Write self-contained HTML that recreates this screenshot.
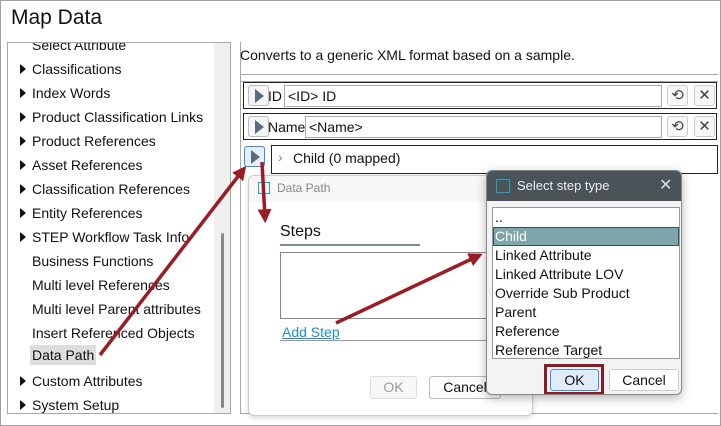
<!DOCTYPE html>
<html><head><style>
*{box-sizing:border-box;margin:0;padding:0}
body{width:721px;height:426px;overflow:hidden;background:#fff;font-family:"Liberation Sans",sans-serif;font-size:14px;color:#111;position:relative}
.abs{position:absolute}
.outer{left:0;top:0;width:721px;height:426px;border:1px solid #a0a0a0}
.title{left:11px;top:6px;font-size:21px;color:#111}
.left{left:7px;top:42px;width:224px;height:372px;border:1px solid #a8a8a8;overflow:hidden;background:#fff}
.sb{left:206px;top:0;width:17px;height:372px;background:#f0f0f0}
.thumb{left:213px;top:190px;width:3px;height:175px;background:#888;border-radius:2px}
.it{position:absolute;left:24px;font-size:14px;white-space:nowrap}
.tri{position:absolute;left:12px;width:0;height:0;border-left:6px solid #111;border-top:5px solid transparent;border-bottom:5px solid transparent}
.sel{background:#ddd;padding:2px 2px;margin-left:-2px}
.right{left:240px;top:42px;width:478px;height:372px;border:1px solid #a8a8a8;border-top:none;border-right:none}
.row{position:absolute;left:243px;width:474px;height:27px;border:1px solid #222;background:#fff}
.btnp{position:absolute;width:21px;height:21px;border:1px solid #bbb;border-radius:3px;background:#f5f5f5}
.btnp:after{content:"";position:absolute;left:6px;top:3px;border-left:9px solid #5a6c80;border-top:7px solid transparent;border-bottom:7px solid transparent}
.fld{position:absolute;height:22px;border:1px solid #aaa;background:#fff;padding-left:3px;line-height:20px}
.ib{position:absolute;width:21px;height:21px;border:1px solid #ccc;border-radius:3px;background:#f7f7f7;font-size:15px;text-align:center;line-height:19px;color:#444}
.dp{left:248px;top:175px;width:285px;height:241px;border:1px solid #ccc;border-radius:6px;background:#fff;box-shadow:0 2px 6px rgba(0,0,0,.15)}
.sd{left:486px;top:170px;width:196px;height:225px;border:1px solid #888;border-radius:6px;background:#f3f3f3;box-shadow:0 3px 10px rgba(0,0,0,.3);overflow:hidden}
.li{position:absolute;left:2px;font-size:14px;white-space:nowrap}
</style></head><body>
<div class="abs outer"></div>
<div class="abs title">Map Data</div>
<div class="abs left">
 <div class="sb abs"></div><div class="thumb abs"></div>
 <div class="it" style="top:-6px">Select Attribute</div>
 <div class="tri" style="top:21px"></div><div class="it" style="top:18px">Classifications</div>
 <div class="tri" style="top:45px"></div><div class="it" style="top:42px">Index Words</div>
 <div class="tri" style="top:69px"></div><div class="it" style="top:66px">Product Classification Links</div>
 <div class="tri" style="top:93px"></div><div class="it" style="top:90px">Product References</div>
 <div class="tri" style="top:117px"></div><div class="it" style="top:114px">Asset References</div>
 <div class="tri" style="top:141px"></div><div class="it" style="top:138px">Classification References</div>
 <div class="tri" style="top:165px"></div><div class="it" style="top:162px">Entity References</div>
 <div class="tri" style="top:189px"></div><div class="it" style="top:186px">STEP Workflow Task Info</div>
 <div class="it" style="top:210px">Business Functions</div>
 <div class="it" style="top:234px">Multi level References</div>
 <div class="it" style="top:258px">Multi level Parent attributes</div>
 <div class="it" style="top:282px">Insert Referenced Objects</div>
 <div class="it" style="top:304px"><span class="sel">Data Path</span></div>
 <div class="tri" style="top:333px"></div><div class="it" style="top:330px">Custom Attributes</div>
 <div class="tri" style="top:357px"></div><div class="it" style="top:354px">System Setup</div>
</div>
<div class="abs right"></div>
<div class="abs" style="left:240px;top:47px">Converts to a generic XML format based on a sample.</div>
<div class="abs" style="left:240px;top:74px;width:478px;height:1px;background:#aaa"></div>
<div class="abs" style="left:241px;top:81px;width:477px;height:1px;background:#aaa"></div>
<div class="row" style="top:82px"><div class="btnp" style="left:4px;top:2px"></div><div class="abs" style="left:24px;top:5px">ID</div><div class="fld" style="left:40px;top:2px;width:378px">&lt;ID&gt; ID</div><div class="ib" style="left:423px;top:2px">⟲</div><div class="ib" style="left:450px;top:2px">✕</div></div>
<div class="row" style="top:113px"><div class="btnp" style="left:4px;top:2px"></div><div class="abs" style="left:24px;top:5px">Name</div><div class="fld" style="left:61px;top:2px;width:357px">&lt;Name&gt;</div><div class="ib" style="left:423px;top:2px">⟲</div><div class="ib" style="left:450px;top:2px">✕</div></div>
<div class="btnp" style="left:244px;top:146px;border-color:#3a8ee0;background:#e6f0fb"></div>
<div class="row" style="left:271px;top:145px;width:447px;height:29px"><div class="abs" style="left:6px;top:3px;color:#888">›</div><div class="abs" style="left:21px;top:4px">Child (0 mapped)</div></div>
<div class="abs dp">
 <div class="abs" style="left:0;top:0;width:283px;height:26px;background:#f7f7f7;border-radius:6px 6px 0 0"></div>
 <div class="abs" style="left:9px;top:6px;width:12px;height:12px;border:1.5px solid #1ba3c6"></div>
 <div class="abs" style="left:28px;top:5px;font-size:12px;color:#888">Data Path</div>
 <div class="abs" style="left:31px;top:47px;font-size:16px">Steps</div>
 <div class="abs" style="left:31px;top:68px;width:140px;height:2px;background:#7a8a99"></div>
 <div class="abs" style="left:31px;top:76px;width:210px;height:67px;border:1px solid #888"></div>
 <div class="abs" style="left:33px;top:148px;color:#1a8fd8;text-decoration:underline">Add Step</div>
 <div class="abs" style="left:31px;top:164px;width:210px;height:1px;background:#999"></div>
 <div class="abs" style="left:121px;top:200px;width:47px;height:23px;border:1px solid #ddd;border-radius:3px;background:#f7f7f7;color:#999;text-align:center;line-height:21px">OK</div>
 <div class="abs" style="left:180px;top:200px;width:72px;height:23px;border:1px solid #bbb;border-radius:3px;background:#fdfdfd;text-align:center;line-height:21px">Cancel</div>
</div>
<div class="abs sd">
 <div class="abs" style="left:0;top:0;width:196px;height:30px;background:#4b5359"></div>
 <div class="abs" style="left:9px;top:8px;width:14px;height:14px;border:1.5px solid #1ba3c6"></div>
 <div class="abs" style="left:30px;top:7px;font-size:13px;color:#eee">Select step type</div>
 <div class="abs" style="left:172px;top:4px;font-size:16px;color:#ddd">✕</div>
 <div class="abs" style="left:5px;top:36px;width:188px;height:152px;border:1px solid #999;background:#fff">
  <div class="li" style="top:1px">..</div>
  <div class="abs" style="left:0;top:19px;width:186px;height:19px;background:#7fa5ab;border:1px solid #2f5660"></div>
  <div class="li" style="top:20px;color:#fff">Child</div>
  <div class="li" style="top:39px">Linked Attribute</div>
  <div class="li" style="top:58px">Linked Attribute LOV</div>
  <div class="li" style="top:77px">Override Sub Product</div>
  <div class="li" style="top:96px">Parent</div>
  <div class="li" style="top:115px">Reference</div>
  <div class="li" style="top:134px">Reference Target</div>
 </div>
 <div class="abs" style="left:57px;top:193px;width:60px;height:31px;border:3px solid #8e1a22"></div>
 <div class="abs" style="left:63px;top:198px;width:49px;height:22px;border:1px solid #3a8ee0;border-radius:3px;background:#e0ecf8;text-align:center;line-height:20px">OK</div>
 <div class="abs" style="left:122px;top:198px;width:70px;height:22px;border:1px solid #ccc;border-radius:3px;background:#fff;text-align:center;line-height:20px">Cancel</div>
</div>
<svg class="abs" style="left:0;top:0" width="721" height="426">
<defs><marker id="a" markerWidth="4" markerHeight="4" refX="2.5" refY="2" orient="auto"><path d="M0,0 L4,2 L0,4 z" fill="#9b1c24"/></marker></defs>
<g stroke="#9b1c24" stroke-width="3.5" fill="none" marker-end="url(#a)">
<line x1="100" y1="355" x2="243" y2="170"/>
<line x1="262" y1="162" x2="265" y2="218"/>
<line x1="336" y1="323" x2="478" y2="256"/>
</g></svg>
</body></html>
